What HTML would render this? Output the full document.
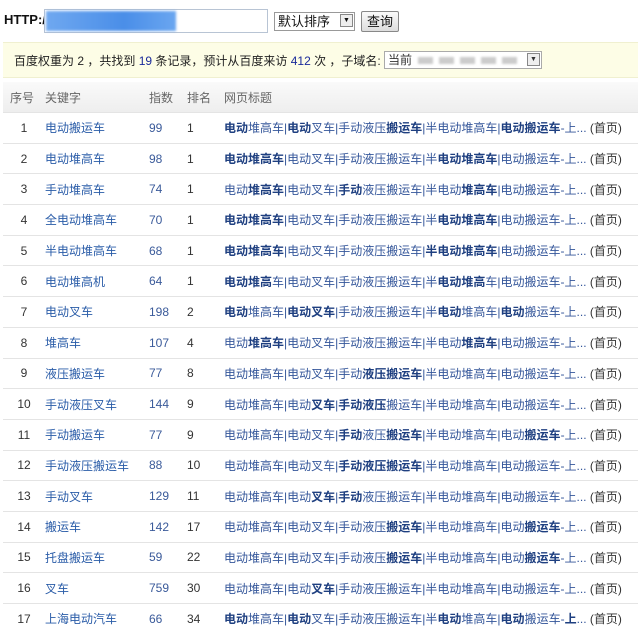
<!DOCTYPE html>
<html><head><meta charset="utf-8"><style>
body{margin:0;width:638px;height:631px;background:#fff;font-family:"Liberation Sans","Noto Sans CJK SC",sans-serif;font-size:12px;color:#333;overflow:hidden;position:relative}
.top{position:absolute;left:4px;top:12px;font-size:13px;font-weight:bold;color:#111}
.url{position:absolute;left:44px;top:9px;width:222px;height:22px;border:1px solid #b8c4d4;background:#fff}
.url i{position:absolute;left:1px;top:1px;width:130px;height:20px;background:linear-gradient(90deg,#6fa8f0,#4a8ee8 60%,#6aa6f0);filter:blur(1.2px)}
.sel{position:absolute;left:274px;top:12px;height:17px;border:1px solid #999;background:#fff;font-size:13px;line-height:17px;padding-left:3px;width:76px;color:#111}
.sel b,.sub b{position:absolute;right:1px;top:1px;width:13px;height:13px;background:#eee;border:1px solid #888;box-sizing:border-box;font-size:7px;line-height:12px;text-align:center;font-weight:normal}
.btn{position:absolute;left:361px;top:11px;width:36px;height:19px;border:1px solid #888;border-radius:2px;background:linear-gradient(#fafafa,#ddd);font-size:13px;line-height:19px;text-align:center;color:#111}
.bar{position:absolute;left:3px;top:42px;width:635px;height:34px;background:#fdfde6;border-top:1px solid #f0f0d0;border-bottom:1px solid #f0f0d0}
.bar .t{position:absolute;left:11px;top:9px;color:#222}
.bar .n{color:#1a2a9a}
.sub{position:absolute;left:381px;top:8px;width:153px;height:16px;border:1px solid #aaa;background:#fff;line-height:16px;padding-left:3px;box-sizing:content-box}
.sub span{display:inline-block;width:15px;height:7px;background:#ccc;margin-left:6px;vertical-align:middle;filter:blur(1px)}
table{position:absolute;left:3px;top:82px;border-collapse:collapse;width:635px;table-layout:fixed}
th{height:30px;font-weight:normal;color:#666;text-align:left;background:linear-gradient(#fafafa,#eeeeee);font-size:12px;padding:0}
td{height:29.7px;border-top:1px solid #e4e4e4;padding:0;color:#1f3f7f;white-space:nowrap;overflow:hidden}
td.no{text-align:center;color:#333}
td.kw{color:#2a5ca8}
td.zs{color:#3a5a9a}
td.pm{color:#333}
td.tt{color:#34569a}
td.tt b{color:#1e3f80}
td.tt em{font-style:normal;color:#333}
</style></head><body>
<div class="top">HTTP://</div>
<div class="url"><i></i></div>
<div class="sel">默认排序<b>▼</b></div>
<div class="btn">查询</div>
<div class="bar"><div class="t">百度权重为 2 ，共找到 <span class="n">19</span> 条记录，预计从百度来访 <span class="n">412</span> 次 ，子域名:</div>
<div class="sub">当前<span></span><span></span><span></span><span></span><span></span><b>▼</b></div></div>
<table>
<colgroup><col style="width:42px"><col style="width:104px"><col style="width:38px"><col style="width:37px"><col></colgroup>
<tr><th style="padding-left:7px">序号</th><th>关键字</th><th>指数</th><th>排名</th><th>网页标题</th></tr>
<tr><td class="no">1</td><td class="kw">电动搬运车</td><td class="zs">99</td><td class="pm">1</td><td class="tt"><b>电动</b>堆高车|<b>电动</b>叉车|手动液压<b>搬运车</b>|半电动堆高车|<b>电动搬运车</b>-上... <em>(首页)</em></td></tr>
<tr><td class="no">2</td><td class="kw">电动堆高车</td><td class="zs">98</td><td class="pm">1</td><td class="tt"><b>电动堆高车</b>|电动叉车|手动液压搬运车|半<b>电动堆高车</b>|电动搬运车-上... <em>(首页)</em></td></tr>
<tr><td class="no">3</td><td class="kw">手动堆高车</td><td class="zs">74</td><td class="pm">1</td><td class="tt">电动<b>堆高车</b>|电动叉车|<b>手动</b>液压搬运车|半电动<b>堆高车</b>|电动搬运车-上... <em>(首页)</em></td></tr>
<tr><td class="no">4</td><td class="kw">全电动堆高车</td><td class="zs">70</td><td class="pm">1</td><td class="tt"><b>电动堆高车</b>|电动叉车|手动液压搬运车|半<b>电动堆高车</b>|电动搬运车-上... <em>(首页)</em></td></tr>
<tr><td class="no">5</td><td class="kw">半电动堆高车</td><td class="zs">68</td><td class="pm">1</td><td class="tt"><b>电动堆高车</b>|电动叉车|手动液压搬运车|<b>半电动堆高车</b>|电动搬运车-上... <em>(首页)</em></td></tr>
<tr><td class="no">6</td><td class="kw">电动堆高机</td><td class="zs">64</td><td class="pm">1</td><td class="tt"><b>电动堆高</b>车|电动叉车|手动液压搬运车|半<b>电动堆高</b>车|电动搬运车-上... <em>(首页)</em></td></tr>
<tr><td class="no">7</td><td class="kw">电动叉车</td><td class="zs">198</td><td class="pm">2</td><td class="tt"><b>电动</b>堆高车|<b>电动叉车</b>|手动液压搬运车|半<b>电动</b>堆高车|<b>电动</b>搬运车-上... <em>(首页)</em></td></tr>
<tr><td class="no">8</td><td class="kw">堆高车</td><td class="zs">107</td><td class="pm">4</td><td class="tt">电动<b>堆高车</b>|电动叉车|手动液压搬运车|半电动<b>堆高车</b>|电动搬运车-上... <em>(首页)</em></td></tr>
<tr><td class="no">9</td><td class="kw">液压搬运车</td><td class="zs">77</td><td class="pm">8</td><td class="tt">电动堆高车|电动叉车|手动<b>液压搬运车</b>|半电动堆高车|电动搬运车-上... <em>(首页)</em></td></tr>
<tr><td class="no">10</td><td class="kw">手动液压叉车</td><td class="zs">144</td><td class="pm">9</td><td class="tt">电动堆高车|电动<b>叉车</b>|<b>手动液压</b>搬运车|半电动堆高车|电动搬运车-上... <em>(首页)</em></td></tr>
<tr><td class="no">11</td><td class="kw">手动搬运车</td><td class="zs">77</td><td class="pm">9</td><td class="tt">电动堆高车|电动叉车|<b>手动</b>液压<b>搬运车</b>|半电动堆高车|电动<b>搬运车</b>-上... <em>(首页)</em></td></tr>
<tr><td class="no">12</td><td class="kw">手动液压搬运车</td><td class="zs">88</td><td class="pm">10</td><td class="tt">电动堆高车|电动叉车|<b>手动液压搬运车</b>|半电动堆高车|电动搬运车-上... <em>(首页)</em></td></tr>
<tr><td class="no">13</td><td class="kw">手动叉车</td><td class="zs">129</td><td class="pm">11</td><td class="tt">电动堆高车|电动<b>叉车</b>|<b>手动</b>液压搬运车|半电动堆高车|电动搬运车-上... <em>(首页)</em></td></tr>
<tr><td class="no">14</td><td class="kw">搬运车</td><td class="zs">142</td><td class="pm">17</td><td class="tt">电动堆高车|电动叉车|手动液压<b>搬运车</b>|半电动堆高车|电动<b>搬运车</b>-上... <em>(首页)</em></td></tr>
<tr><td class="no">15</td><td class="kw">托盘搬运车</td><td class="zs">59</td><td class="pm">22</td><td class="tt">电动堆高车|电动叉车|手动液压<b>搬运车</b>|半电动堆高车|电动<b>搬运车</b>-上... <em>(首页)</em></td></tr>
<tr><td class="no">16</td><td class="kw">叉车</td><td class="zs">759</td><td class="pm">30</td><td class="tt">电动堆高车|电动<b>叉车</b>|手动液压搬运车|半电动堆高车|电动搬运车-上... <em>(首页)</em></td></tr>
<tr><td class="no">17</td><td class="kw">上海电动汽车</td><td class="zs">66</td><td class="pm">34</td><td class="tt"><b>电动</b>堆高车|<b>电动</b>叉车|手动液压搬运车|半<b>电动</b>堆高车|<b>电动</b>搬运车-<b>上</b>... <em>(首页)</em></td></tr>
</table>
</body></html>
